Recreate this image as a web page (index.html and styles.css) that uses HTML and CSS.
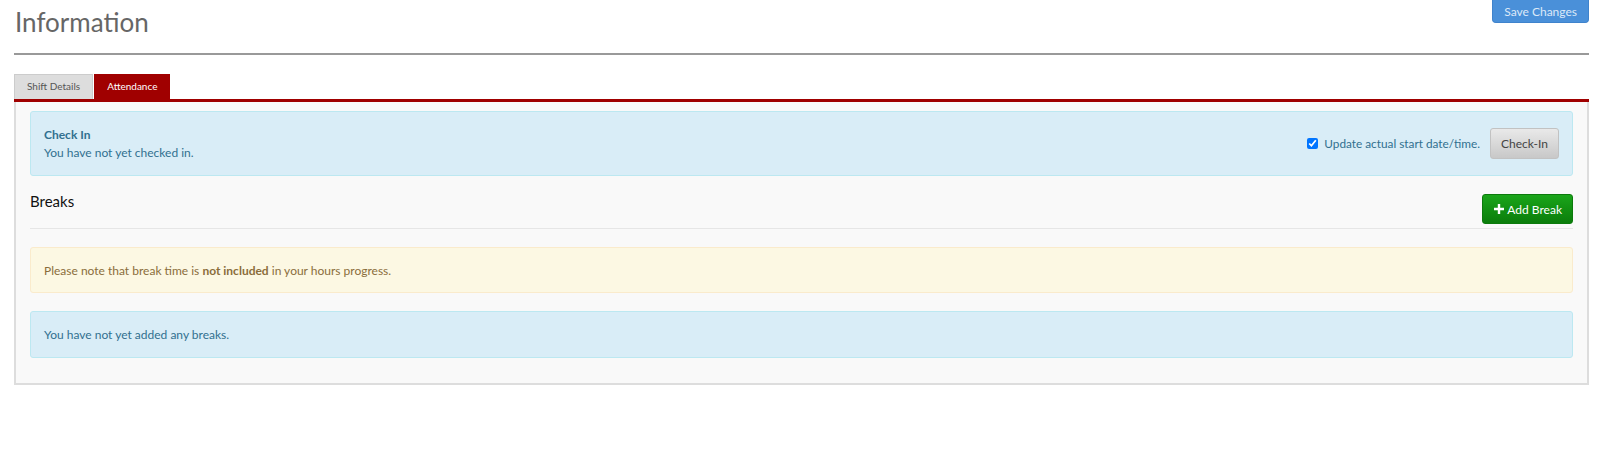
FILE: index.html
```html
<!DOCTYPE html>
<html lang="en">
<head>
    <meta charset="UTF-8">
    <title>Information</title>
    <link rel="stylesheet" href="styles.css">
</head>
<body>
    <div class="page">
        <div class="page-header">
            <h1>Information</h1>
            <button class="btn btn-primary">Save Changes</button>
        </div>

        <ul class="tabs">
            <li class="tab">Shift Details</li>
            <li class="tab active">Attendance</li>
        </ul>

        <div class="tab-panel">
            <div class="alert alert-info checkin">
                <div>
                    <strong>Check In</strong>
                    <div>You have not yet checked in.</div>
                </div>
                <div class="checkin-actions">
                    <label class="check-label"><input type="checkbox" checked> Update actual start date/time.</label>
                    <button class="btn btn-default">Check-In</button>
                </div>
            </div>

            <div class="section-head">
                <h3>Breaks</h3>
                <button class="btn btn-success">
                    <svg width="10" height="10" viewBox="0 0 10 10"><path d="M3.8 0h2.4v3.8H10v2.4H6.2V10H3.8V6.2H0V3.8h3.8z" fill="#fff"/></svg>
                    Add Break
                </button>
            </div>

            <div class="alert alert-warning">
                <p>Please note that break time is <strong>not included</strong> in your hours progress.</p>
            </div>

            <div class="alert alert-info">
                <p>You have not yet added any breaks.</p>
            </div>
        </div>
    </div>
</body>
</html>
```

FILE: styles.css
```css
body {
    margin: 0;
    font-family: "Lato", "Open Sans", sans-serif;
    font-size: 12px;
    color: #333;
    background: #fff;
}
.page {
    padding: 0 14px;
}
.page-header {
    display: flex;
    justify-content: space-between;
    align-items: flex-start;
    border-bottom: 2px solid #999;
    height: 53px;
}
.page-header h1 {
    margin: 6px 0 0 1px;
    font-size: 26px;
    font-weight: normal;
    color: #666;
}
.btn {
    font-family: inherit;
    font-size: 12px;
    border-radius: 3px;
    cursor: pointer;
    display: inline-flex;
    align-items: center;
    gap: 3px;
}
.btn-primary {
    background: #4a90d9;
    border: 1px solid #3f83cc;
    border-top: none;
    color: #dce9f8;
    height: 23px;
    padding: 0 11px;
    border-radius: 0 0 4px 4px;
}
.tabs {
    list-style: none;
    margin: 19px 0 0 0;
    padding: 0;
    display: flex;
    border-bottom: 3px solid #a00000;
}
.tab {
    font-size: 10px;
    padding: 0 12px;
    height: 25px;
    line-height: 23px;
    background: #ddd;
    color: #555;
    border: 1px solid #ccc;
    border-bottom: none;
    box-sizing: border-box;
}
.tab.active {
    background: #a00000;
    color: #fff;
    border-color: #a00000;
    margin-left: 1px;
}
.tab-panel {
    background: #f9f9f9;
    border: 2px solid #ddd;
    border-top: none;
    padding: 9px 14px 25px 14px;
}
.alert {
    border: 1px solid #bce8f1;
    border-radius: 3px;
    padding: 0 13px;
    height: 46px;
    box-sizing: border-box;
    display: flex;
    align-items: center;
}
.alert p {
    margin: 0;
}
.alert-info {
    background: #d9edf7;
    color: #31708f;
}
.alert-warning {
    background: #fcf8e3;
    border-color: #faebcc;
    color: #8a6d3b;
    margin-top: 18px;
}
.alert-warning + .alert-info {
    margin-top: 18px;
    height: 47px;
}
.checkin {
    height: 65px;
    justify-content: space-between;
    line-height: 1.45;
}
.checkin strong {
    display: block;
}
.checkin-actions {
    display: flex;
    align-items: center;
    gap: 10px;
}
.check-label {
    display: flex;
    align-items: center;
    gap: 6px;
    font-size: 11.8px;
}
.check-label input {
    margin: 0;
    width: 11px;
    height: 11px;
}
.btn-default {
    background: linear-gradient(#e9e9e9, #c8c8c8);
    border: 1px solid #c2c2c2;
    color: #444;
    height: 31px;
    padding: 0 10px;
}
.section-head {
    display: flex;
    justify-content: space-between;
    align-items: flex-start;
    border-bottom: 1px solid #e6e6e6;
    padding: 16px 0 4px 0;
}
.section-head h3 {
    margin: 0;
    font-size: 15px;
    line-height: 18px;
    font-weight: normal;
    color: #111;
}
.btn-success {
    background: linear-gradient(#1aa51a, #0b7d0b);
    border: 1px solid #0c7a0c;
    color: #fff;
    height: 30px;
    margin-top: 2px;
    padding: 0 10px 0 11px;
}
```
